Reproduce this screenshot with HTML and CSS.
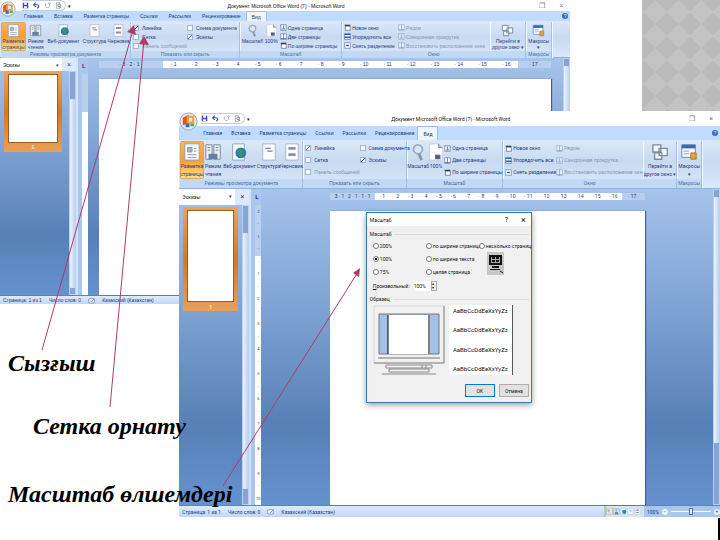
FILE: index.html
```
<!DOCTYPE html>
<html lang="kk">
<head>
  <meta charset="UTF-8">
  <meta name="viewport" content="width=device-width, initial-scale=1.0">
  <title>Microsoft Word: Вид</title>
  <link rel="stylesheet" href="styles.css">
</head>
<body>
  <svg width="0" height="0" class="defs" aria-hidden="true">
    <symbol id="i-office" viewBox="0 0 20 20">
      <circle cx="10" cy="10" r="9" fill="#e4e9f1" stroke="#93a3bd"/>
      <path d="M4 6l6-3v9l-6 2z" fill="#e2551c"/>
      <path d="M9 5h6v6H9z" fill="none" stroke="#f0a22a" stroke-width="2"/>
      <path d="M7 12h4v4H7z" fill="#2f6fc4"/><path d="M12 12h4v3h-4z" fill="#62a93a"/>
    </symbol>
    <symbol id="i-save" viewBox="0 0 10 10"><path d="M1 1h8v8H1z" fill="#4347ae"/><path d="M3 1h4v3H3zM3 6h4v3H3z" fill="#fff"/></symbol>
    <symbol id="i-undo" viewBox="0 0 10 10"><path d="M2 4h4c3 0 3 3 0 5M4 1L1 4l3 3" fill="none" stroke="#3b55b5" stroke-width="1.6"/></symbol>
    <symbol id="i-redo" viewBox="0 0 10 10"><path d="M2 2v3c0 4 6 4 6 0V2M6 3l2-2 2 2" fill="none" stroke="#a7b2c6" stroke-width="1.4"/></symbol>
    <symbol id="i-preview" viewBox="0 0 10 10"><path d="M2 1h5v8H2z" fill="#fff" stroke="#8996ab"/><circle cx="6" cy="5" r="2" fill="#dfe9f5" stroke="#596c8c"/><path d="M7 7l2 2" stroke="#596c8c"/></symbol>
    <symbol id="i-page" viewBox="0 0 20 20"><path d="M2 1h16v18H2z" fill="#fbfcfe" stroke="#8c9cb4"/><path d="M5 5h5v5H5zM12 6h3M12 9h3M5 13h10M5 16h10" fill="#a9b8cc" stroke="#8592a3"/></symbol>
    <symbol id="i-outline" viewBox="0 0 20 20"><path d="M3 1h14v18H3z" fill="#fbfcfe" stroke="#a3b1c6"/><path d="M6 6h6M8 9h6" stroke="#7d8793" stroke-width="1.5"/></symbol>
    <symbol id="i-draft" viewBox="0 0 20 20"><path d="M3 1h14v18H3z" fill="#fbfcfe" stroke="#a3b1c6"/><path d="M6 6h8M6 13h8" stroke="#8a949f" stroke-width="3"/></symbol>
    <symbol id="i-read" viewBox="0 0 20 20"><path d="M2 2h7v16H2zM11 2h7v16h-7z" fill="#edf2f8" stroke="#6f8096"/><path d="M4 5h3M4 8h3M13 5h3M13 8h3" stroke="#66788f"/><path d="M5 12h10v6H5z" fill="#67809e"/></symbol>
    <symbol id="i-web" viewBox="0 0 20 20"><path d="M3 1h13v18H3z" fill="#fbfcfe" stroke="#8c9cb4"/><circle cx="12" cy="11" r="6" fill="#287bb5"/><path d="M8 8l5-1 2 4-3 5-3-4z" fill="#3c9a59"/></symbol>
    <symbol id="i-lens" viewBox="0 0 20 20"><circle cx="10" cy="7" r="5" fill="#d8e6f5" stroke="#9aa9bd" stroke-width="2"/><path d="M11 12l3 7" stroke="#8595ab" stroke-width="3"/></symbol>
    <symbol id="i-hundred" viewBox="0 0 20 20"><path d="M3 1h10l4 4v14H3z" fill="#fff" stroke="#c3cddb"/><path d="M13 1v4h4" fill="#bac8dc" stroke="#6d7d95"/><path d="M9 13h6v5H9z" fill="#51657f"/></symbol>
    <symbol id="i-one" viewBox="0 0 10 10"><path d="M1 1h8v8H1z" fill="#e9f0fa" stroke="#667ea4"/><path d="M5 2v5M3 7h4" stroke="#3e5c8c"/></symbol>
    <symbol id="i-two" viewBox="0 0 10 10"><path d="M1 1h8v8H1z" fill="#fff" stroke="#667ea4"/><path d="M5 1v8M1 8h8" stroke="#3e5c8c"/></symbol>
    <symbol id="i-wide" viewBox="0 0 10 10"><path d="M2 3h7v6H2z" fill="#fff" stroke="#52637d"/><path d="M1 2h8" stroke="#333f55" stroke-width="2"/></symbol>
    <symbol id="i-win" viewBox="0 0 10 10"><path d="M1 1h8v8H1z" fill="#fff" stroke="#4269aa"/><path d="M1 2h8M1 6h8" stroke="#2d5fb0" stroke-width="2"/></symbol>
    <symbol id="i-split" viewBox="0 0 10 10"><path d="M1 1h8v8H1z" fill="#fff" stroke="#5d7db0"/><path d="M3 5h4" stroke="#2c4f8c" stroke-width="2"/></symbol>
    <symbol id="i-switch" viewBox="0 0 20 20"><path d="M2 2h9v8H2zM9 6h9v8H9zM4 11h8v7H4z" fill="#f6f9fd" stroke="#7c8a9d" stroke-width="1.5"/></symbol>
    <symbol id="i-macro" viewBox="0 0 20 20"><path d="M2 2h15v14H2z" fill="#f6f9fd" stroke="#6a82a8"/><path d="M2 4h15" stroke="#3968b5" stroke-width="4"/><path d="M4 9h6M4 12h6" stroke="#8b9bb2"/><path d="M12 11h6v7h-6z" fill="#e0a63b" stroke="#a97726"/></symbol>
    <symbol id="i-book" viewBox="0 0 10 10"><path d="M1 3l4-1 4 1v5l-4 1-4-1z" fill="#eef3fa" stroke="#7286a6"/><path d="M4 6l1 1 4-5" fill="none" stroke="#4f668c"/></symbol>
  </svg>

  <template id="chrome">
    <header class="titlebar">
      <button class="office" aria-label="Office"><svg><use href="#i-office"/></svg></button>
      <div class="quick">
        <svg><use href="#i-save"/></svg>
        <svg><use href="#i-undo"/></svg>
        <svg><use href="#i-redo"/></svg>
        <svg><use href="#i-preview"/></svg>
      </div>
      <span class="more">▾</span>
      <h2>Документ Microsoft Office Word (7) - Microsoft Word</h2>
      <div class="sys"><span>❐</span><span>×</span></div>
    </header>
    <nav class="tabs">
      <a href="#">Главная</a><a href="#">Вставка</a><a href="#">Разметка страницы</a><a href="#">Ссылки</a><a href="#">Рассылки</a><a href="#">Рецензирование</a><a href="#" class="active">Вид</a>
      <span class="help">?</span>
    </nav>
    <div class="ribbon">
      <section class="group">
        <div class="tools modes">
          <button class="big on"><svg><use href="#i-page"/></svg>Разметка страницы</button>
          <button class="big"><svg><use href="#i-read"/></svg>Режим чтения</button>
          <button class="big"><svg><use href="#i-web"/></svg>Веб-документ</button>
          <button class="big"><svg><use href="#i-outline"/></svg>Структура</button>
          <button class="big"><svg><use href="#i-draft"/></svg>Черновик</button>
        </div>
        <h3>Режимы просмотра документа</h3>
      </section>
      <section class="group">
        <div class="tools checks">
          <label><input type="checkbox" checked>Линейка</label>
          <label><input type="checkbox">Схема документа</label>
          <label><input type="checkbox">Сетка</label>
          <label><input type="checkbox" checked>Эскизы</label>
          <label class="off"><input type="checkbox" disabled>Панель сообщений</label>
        </div>
        <h3>Показать или скрыть</h3>
      </section>
      <section class="group">
        <div class="tools scale">
          <button class="big"><svg><use href="#i-lens"/></svg>Масштаб</button>
          <button class="big"><svg><use href="#i-hundred"/></svg>100%</button>
          <div class="list">
            <button><svg><use href="#i-one"/></svg>Одна страница</button>
            <button><svg><use href="#i-two"/></svg>Две страницы</button>
            <button><svg><use href="#i-wide"/></svg>По ширине страницы</button>
          </div>
        </div>
        <h3>Масштаб</h3>
      </section>
      <section class="group">
        <div class="tools windows">
          <div class="list">
            <button><svg><use href="#i-wide"/></svg>Новое окно</button>
            <button><svg><use href="#i-win"/></svg>Упорядочить все</button>
            <button><svg><use href="#i-split"/></svg>Снять разделение</button>
          </div>
          <div class="list off">
            <button><svg><use href="#i-two"/></svg>Рядом</button>
            <button><svg><use href="#i-one"/></svg>Синхронная прокрутка</button>
            <button><svg><use href="#i-two"/></svg>Восстановить расположение окна</button>
          </div>
          <button class="big"><svg><use href="#i-switch"/></svg>Перейти в другое окно ▾</button>
        </div>
        <h3>Окно</h3>
      </section>
      <section class="group">
        <div class="tools one">
          <button class="big"><svg><use href="#i-macro"/></svg>Макросы ▾</button>
        </div>
        <h3>Макросы</h3>
      </section>
    </div>
  </template>

  <main class="slide">
    <div class="pattern"></div>

    <article class="word back">
      <div class="chrome"></div>
      <div class="work">
        <aside class="panel">
          <div class="panel-head"><select aria-label="Панель"><option>Эскизы</option></select><span>▾</span><button aria-label="Закрыть">×</button></div>
          <div class="panel-body">
            <div class="thumb"><div></div><span>1</span></div>
            <div class="scroll"><i></i></div>
          </div>
        </aside>
        <div class="vruler"><b>L</b><div></div></div>
        <div class="doc">
          <div class="ruler"><span>· 3 · 2 · 1 ·</span><span class="lit"><em>· 1</em><em>· 2</em><em>· 3</em><em>· 4</em><em>· 5</em><em>· 6</em><em>· 7</em><em>· 8</em><em>· 9</em><em>· 10</em><em>· 11</em><em>· 12</em><em>· 13</em><em>· 14</em><em>· 15</em><em>· 16</em></span><span>· 17 ·</span></div>
          <div class="page"></div>
        </div>
        <div class="scroll main"><i></i></div>
      </div>
      <footer class="status"><span>Страница: 1 из 1</span><span>Число слов: 0</span><svg><use href="#i-book"/></svg><span>Казахский (Казахстан)</span></footer>
    </article>

    <article class="word front">
      <div class="chrome"></div>
      <div class="work">
        <aside class="panel">
          <div class="panel-head"><select aria-label="Панель"><option>Эскизы</option></select><span>▾</span><button aria-label="Закрыть">×</button></div>
          <div class="panel-body">
            <div class="thumb"><div></div><span>1</span></div>
            <div class="scroll"><i></i></div>
          </div>
        </aside>
        <div class="vruler"><b>L</b><div><em>2</em><em>-</em><em>1</em><em>-</em><em>-</em><em>1</em><em>-</em><em>2</em><em>-</em><em>3</em><em>-</em><em>4</em><em>-</em><em>5</em><em>-</em><em>6</em><em>-</em><em>7</em><em>-</em><em>8</em><em>-</em><em>9</em><em>-</em><em>10</em></div></div>
        <div class="doc">
          <div class="ruler"><span>3 · 1 · 2 · 1 · 1 · 1</span><span class="lit"><em>· 1</em><em>· 2</em><em>· 3</em><em>· 4</em><em>· 5</em><em>· 6</em><em>· 7</em><em>· 8</em><em>· 9</em><em>· 10</em><em>· 11</em><em>· 12</em><em>· 13</em><em>· 14</em><em>· 15</em><em>· 16</em></span><span>· 17 ·</span></div>
          <div class="page"></div>
        </div>
        <div class="scroll main"><i></i></div>
      </div>
      <footer class="status">
        <span>Страница: 1 из 1</span><span>Число слов: 0</span><svg><use href="#i-book"/></svg><span>Казахский (Казахстан)</span>
        <div class="zoom">
          <div class="views"><svg class="current"><use href="#i-page"/></svg><svg><use href="#i-read"/></svg><svg><use href="#i-web"/></svg><svg><use href="#i-outline"/></svg><svg><use href="#i-draft"/></svg></div>
          100%<button aria-label="Уменьшить">−</button><input type="range" aria-label="Масштаб"><button aria-label="Увеличить">+</button>
        </div>
      </footer>

      <form class="dialog">
        <header>Масштаб<span>?</span><button type="button" aria-label="Закрыть">×</button></header>
        <div class="dialog-body">
          <h4>Масштаб</h4>
          <div class="radios">
            <label><input type="radio" name="z">200%</label>
            <label><input type="radio" name="z">по ширине страницы</label>
            <label><input type="radio" name="z">несколько страниц:</label>
            <label><input type="radio" name="z" checked>100%</label>
            <label><input type="radio" name="z">по ширине текста</label>
            <button type="button" class="monitor" aria-label="Страницы">
              <svg viewBox="0 0 17 23"><path d="M2 3h13v10H2z" fill="#111"/><path d="M4 5h9v6H4z" fill="#aaa"/><path d="M5 5h3v2H5zM9 5h3v2H9zM5 8h3v2H5zM9 8h3v2H9z" fill="#111"/><path d="M5 14h7v2H5zM3 17h10v1H3z" fill="#111"/><path d="M13 19l3 2" stroke="#111"/></svg>
            </button>
            <label><input type="radio" name="z">75%</label>
            <label><input type="radio" name="z">целая страница</label>
          </div>
          <label class="custom"><span><u>П</u>роизвольный:</span><input type="text" value="100%"><i>▴<br>▾</i></label>
          <h4>Образец</h4>
          <div class="sample">
            <svg viewBox="0 0 72 70" class="crt">
              <path d="M1 1h70v57H1z" fill="#f0f0f0"/>
              <path d="M1 58V1h70" fill="none" stroke="#d8d8d8"/>
              <path d="M71 1v57H1M5 53h62" fill="none" stroke="#777"/>
              <path d="M6 9h60v40H6z" fill="#a5c0e8" stroke="#777"/>
              <path d="M15 10h42v39H15z" fill="#fff"/><path d="M15 10v39M56 10v39" stroke="#000"/>
              <path d="M13 60h46v3H13zM16 64h40v3H16zM9 69h54M49 60v3M53 60v3" fill="none" stroke="#888"/>
            </svg>
            <div class="text"><p>AaBbCcDdEeXxYyZz</p><p>AaBbCcDdEeXxYyZz</p><p>AaBbCcDdEeXxYyZz</p><p>AaBbCcDdEeXxYyZz</p></div>
          </div>
          <div class="actions"><button type="button" class="ok">OK</button><button type="button">Отмена</button></div>
        </div>
      </form>
    </article>

    <svg class="arrows" viewBox="0 0 720 540" preserveAspectRatio="none" aria-hidden="true">
      <path d="M42 350L133 30M110 407L144 40M223 486L358 272" fill="none" stroke="#b03a68"/>
      <path d="M134 25l2 10-9-3zM144 36l5 9-10-1zM360 268l-1 9-6-4z" fill="#b03a68"/>
    </svg>
    <p class="note ruler-note">Сызғыш</p>
    <p class="note grid-note">Сетка орнату</p>
    <p class="note zoom-note">Масштаб өлшемдері</p>
    <div class="edge"></div>
  </main>

  <script>
    const chrome = document.getElementById('chrome');
    document.querySelectorAll('.chrome').forEach((el) => {
      el.append(chrome.content.cloneNode(true));
    });
  </script>
</body>
</html>
```
FILE: styles.css
```
* {
  box-sizing: border-box;
}

body {
  margin: 0;
  background: #fff;
  font-family: "Liberation Sans", Arial, sans-serif;
}

h2, h3, h4, p {
  margin: 0;
  font-weight: normal;
}

button, select, input {
  margin: 0;
  padding: 0;
  border: 0;
  background: none;
  color: inherit;
  font: inherit;
}

a {
  color: inherit;
  text-decoration: none;
}

svg {
  display: block;
  flex: none;
}

em, i {
  font-style: normal;
}

.defs {
  position: absolute;
}

.slide {
  position: relative;
  min-height: 540px;
  overflow: hidden;
}

.pattern {
  position: absolute;
  top: 0;
  right: 0;
  width: 78px;
  height: 111px;
  background:
    linear-gradient(45deg, #bababa 25%, transparent 25% 75%, #bababa 75%) 2px 0 / 23px 24px,
    linear-gradient(-45deg, #bababa 25%, #c3c3c3 25% 75%, #bababa 75%) 2px 0 / 23px 24px;
}

.edge {
  position: absolute;
  right: 0;
  bottom: 0;
  width: 2px;
  height: 22px;
  background: #000;
}

/* Word windows */
.word {
  position: absolute;
  font-size: 5px;
  line-height: 6px;
  color: #1c3a78;
  white-space: nowrap;
}

.back {
  --title: 11px;
  --tab: 10px;
  --gap: 11px;
  --ribbon: 37px;
  --label: 7px;
  --icon: 13px;
  --row: 9px;
  --line: 6px;
  --bar: 9px;
  --work: 237px;
  --head: 13px;
  --office: 16px;
  top: 0;
  left: 0;
  width: 79.2%;
}

.front {
  --title: 15px;
  --tab: 14px;
  --gap: 9px;
  --ribbon: 49px;
  --label: 9px;
  --icon: 18px;
  --row: 12px;
  --line: 8px;
  --bar: 12px;
  --work: 316px;
  --head: 16px;
  --office: 19px;
  top: 111px;
  right: 0;
  width: 75.1%;
  font-family: Roboto, "Liberation Sans", sans-serif;
}

.titlebar {
  position: relative;
  display: flex;
  align-items: center;
  height: var(--title);
  padding-left: 22px;
  background: #fff;
  color: #111;
}

.office {
  position: absolute;
  top: 1px;
  left: 0;
  z-index: 1;
}

.office svg {
  width: var(--office);
  height: var(--office);
}

.quick {
  display: flex;
  gap: 4px;
  padding: 1px 3px 1px 0;
  border: 1px solid #c3cbd8;
  border-left: 0;
  border-radius: 0 6px 6px 0;
}

.quick svg {
  width: 7px;
  height: 7px;
}

.more {
  padding-left: 2px;
}

.titlebar h2 {
  flex: 1;
  padding-right: 38px;
  font-size: 5px;
  text-align: center;
}

.sys {
  display: flex;
  gap: 14px;
  padding-right: 7px;
  font-size: 7px;
  color: #777;
}

.tabs {
  display: flex;
  align-items: center;
  height: var(--tab);
  padding: 0 2px 0 24px;
  gap: var(--gap);
  background: #bfdbff;
}

.tabs .active {
  align-self: stretch;
  display: flex;
  align-items: center;
  margin-left: -6px;
  padding: 0 5px;
  border: 1px solid #9dbbe3;
  border-bottom: 0;
  border-radius: 2px 2px 0 0;
  background: #eef5fd;
}

.help {
  width: 6px;
  margin-left: auto;
  border-radius: 50%;
  background: #3a68c0;
  color: #fff;
  text-align: center;
}

.ribbon {
  display: grid;
  grid-template-columns: 130fr 109fr 102fr 184fr 26fr;
  height: var(--ribbon);
  padding: 1px 18px 1px 1px;
  border-bottom: 1px solid #8fb2e2;
  background: linear-gradient(#dce8f7, #c8daf0 45%, #d9e9fb);
}

.group {
  display: flex;
  flex-direction: column;
  min-width: 0;
  border-right: 1px solid #a2bfe4;
  box-shadow: 1px 0 #f3f8fe;
}

.group h3 {
  height: var(--label);
  overflow: hidden;
  background: #c1d9f2;
  color: #4a6da6;
  font-size: 5px;
  line-height: var(--label);
  text-align: center;
}

.tools {
  display: grid;
  flex: 1;
  min-height: 0;
}

.modes {
  grid-template-columns: 25fr 20fr 36fr 26fr 23fr;
}

.scale {
  grid-template-columns: 24fr 13fr 62fr;
}

.windows {
  grid-template-columns: 53fr 92fr 35fr;
}

.big {
  display: flex;
  flex-direction: column;
  align-items: center;
  min-width: 0;
  padding-top: 1px;
  line-height: var(--line);
  white-space: normal;
}

.big svg {
  width: var(--icon);
  height: var(--icon);
  margin: 1px 0;
}

.on {
  padding: 0;
  border: 1px solid #d7a95c;
  border-radius: 2px;
  background: linear-gradient(#f9b45d, #fb9a30 50%, #ffe08a);
}

.windows .big {
  border-left: 1px solid #f3f8fe;
}

.checks {
  grid-template-columns: 52fr 51fr;
  grid-auto-rows: var(--row);
  padding: 1px 0 0 2px;
}

.checks label, .list button {
  display: flex;
  align-items: center;
  gap: 3px;
}

.list button {
  gap: 1px;
}

.checks input {
  appearance: none;
  width: 6px;
  height: 6px;
  border: 1px solid #a4b4cc;
  background: #f4f7fb;
}

.checks input:checked {
  background: linear-gradient(135deg, #f4f7fb 40%, #4d648c 40% 60%, #f4f7fb 60%);
}

.off {
  color: #8796af;
}

.list {
  display: grid;
  grid-auto-rows: var(--row);
  align-content: start;
  min-width: 0;
  padding: 1px 0 0 2px;
}

.list svg {
  width: 7px;
  height: 7px;
}

.list.off svg {
  opacity: 0.5;
}

/* document area */
.work {
  display: flex;
  height: var(--work);
  background: linear-gradient(#a6c3eb, #86a9d9 30%, #5680b6 75%, #6692d0);
}

.panel {
  display: flex;
  flex-direction: column;
  width: 76px;
}

.front .panel {
  width: 70px;
}

.panel-head {
  display: flex;
  align-items: center;
  height: var(--head);
  background: #dce9fb;
}

.panel-head select {
  appearance: none;
  flex: 1;
  align-self: stretch;
  padding-left: 3px;
  background: #fff;
  color: #111;
}

.panel-head span {
  align-self: stretch;
  padding: 4px 3px 0 0;
  background: #fff;
}

.panel-head button {
  width: 14px;
  font-size: 7px;
}

.panel-body {
  display: flex;
  flex: 1;
  justify-content: space-between;
  padding-left: 4px;
}

.thumb {
  align-self: start;
  width: 58px;
  padding: 3px 4px 0;
  background: linear-gradient(#eba35e, #d27a22 50%, #e99f5a);
  color: #fff;
  text-align: center;
}

.front .thumb {
  width: 55px;
  margin-top: 2px;
}

.thumb div {
  height: 69px;
  border: 1px solid #9a5c20;
  background: #fff;
}

.front .thumb div {
  height: 92px;
}

.thumb span {
  display: block;
  font-size: 6px;
  line-height: 9px;
}

.scroll {
  width: 7px;
  padding-top: 7px;
  border: 1px solid #b9d0f0;
  background: #86a5d3;
}

.scroll i {
  display: block;
  height: 80%;
  border-radius: 1px;
  background: linear-gradient(90deg, #eef4fd, #bdd3f0);
}

.panel .scroll i {
  height: 88%;
  margin-top: 20px;
}

.vruler {
  display: flex;
  flex-direction: column;
  width: 12px;
  padding-left: 4px;
  border-left: 2px solid #d3e3f8;
  background: #a9c6ee;
}

.vruler b {
  height: 16px;
  font-size: 6px;
  line-height: 16px;
}

.vruler div {
  display: flex;
  flex: 1;
  flex-direction: column;
  justify-content: space-between;
  padding: 4px 0;
  background: linear-gradient(#b9cfee 17%, #fff 17%);
  font-size: 4px;
  line-height: 5px;
  text-align: center;
}

.doc {
  display: flex;
  flex: 1;
  flex-direction: column;
  min-width: 0;
  padding: 3px 12px 0 11px;
}

.front .doc {
  padding: 4px 68px 0 69px;
}

.ruler {
  display: grid;
  grid-template-columns: 64fr 355fr 33fr;
  height: 7px;
  background: #b9cfee;
  font-size: 5px;
  line-height: 7px;
  text-align: center;
}

.front .ruler {
  grid-template-columns: 45fr 247fr 23fr;
}

.ruler .lit {
  display: flex;
  justify-content: space-around;
  background: #fff;
}

.page {
  flex: 1;
  margin-top: 11px;
  background: #fff;
  box-shadow: 1px 0 1px #41618f;
}

.status {
  display: flex;
  align-items: center;
  gap: 7px;
  height: var(--bar);
  padding-left: 3px;
  border-top: 1px solid #5f81b3;
  background: linear-gradient(#dfebfc, #c0d7f5);
}

.status svg {
  width: 7px;
  height: 7px;
}

.zoom {
  display: flex;
  align-items: center;
  align-self: stretch;
  gap: 3px;
  margin-left: auto;
  padding-left: 2px;
  background: #a9c6ef;
}

.views {
  display: flex;
  align-items: center;
  align-self: stretch;
  padding-right: 3px;
  background: #d5e3f6;
}

.views .current {
  background: #f2b25c;
}

.zoom button {
  width: 6px;
  height: 6px;
  border-radius: 50%;
  background: #eef4fc;
  line-height: 5px;
}

.zoom input {
  appearance: none;
  width: 40px;
  height: 1px;
  background: #fff;
}

.zoom input::-webkit-slider-thumb {
  appearance: none;
  width: 4px;
  height: 7px;
  border: 1px solid #5474a6;
  background: #e7effb;
}

/* zoom dialog */
.dialog {
  position: absolute;
  top: 101px;
  left: 34.5%;
  width: 166px;
  border: 1px solid #2f7ac4;
  box-shadow: 0 2px 6px rgba(0, 0, 0, 0.4);
  background: #f0f0f0;
  color: #111;
}

.dialog header {
  display: flex;
  align-items: center;
  height: 13px;
  padding: 0 5px 0 3px;
  background: #fff;
}

.dialog header span {
  margin-left: auto;
  padding-right: 13px;
  font-size: 7px;
}

.dialog header button {
  font-size: 9px;
}

.dialog-body {
  padding: 5px 2px 4px 3px;
}

.dialog h4 {
  display: flex;
  align-items: center;
  gap: 3px;
  font-size: 5px;
  line-height: 6px;
}

.dialog h4::after {
  content: "";
  flex: 1;
  border-top: 1px solid #dcdcdc;
}

.radios {
  display: grid;
  grid-template-columns: 53px 53px 1fr;
  grid-auto-rows: 13px;
  padding: 2px 0 0 3px;
}

.radios label {
  display: flex;
  align-items: center;
  gap: 1px;
}

.radios input {
  appearance: none;
  flex: none;
  width: 6px;
  height: 6px;
  border: 1px solid #777;
  border-radius: 50%;
  background: #fff;
}

.radios input:checked {
  background: radial-gradient(#111 35%, #fff 45%);
}

.monitor {
  grid-row: 2 / 4;
  grid-column: 3;
  width: 17px;
  height: 23px;
  margin-left: 8px;
  background: #c6c6c6;
}

.custom {
  display: flex;
  align-items: center;
  height: 10px;
  margin: 3px 0 5px 3px;
}

.custom input {
  width: 17px;
  height: 10px;
  margin-left: 4px;
  background: #fff;
}

.custom i {
  width: 6px;
  border: 1px solid #aaa;
  font-size: 4px;
  line-height: 4px;
}

.sample {
  display: flex;
  gap: 4px;
  padding: 3px 0 0 3px;
}

.crt {
  width: 72px;
  height: 70px;
}

.text {
  display: flex;
  flex-direction: column;
  justify-content: space-between;
  width: 64px;
  padding: 3px 0;
  border-right: 1px solid #555;
  background: #fff;
  font-size: 6px;
  text-align: center;
}

.actions {
  display: flex;
  justify-content: flex-end;
  gap: 4px;
  margin-top: 9px;
  padding-bottom: 1px;
}

.actions button {
  width: 30px;
  height: 13px;
  border: 1px solid #adadad;
  background: #e1e1e1;
}

.actions .ok {
  border-color: #0078d7;
}

/* captions and pointers */
.arrows {
  position: absolute;
  top: 0;
  left: 0;
  width: 100%;
  height: 540px;
}

.note {
  position: absolute;
  left: 8px;
  font: italic bold 24px/28px "Liberation Serif", "Times New Roman", serif;
  color: #000;
  white-space: nowrap;
}

.ruler-note {
  top: 349px;
}

.grid-note {
  top: 412px;
  left: 33px;
}

.zoom-note {
  top: 480px;
}
```
